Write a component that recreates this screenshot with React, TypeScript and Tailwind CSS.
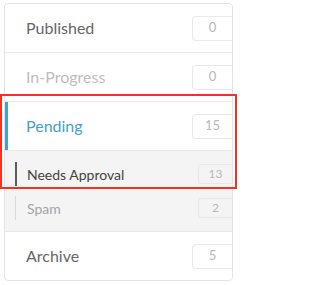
const main = [
  { label: "Published", count: 0, color: "text-[#666666]" },
  { label: "In-Progress", count: 0, color: "text-[#bdbdbd]" },
];

function Badge({ count, small }: { count: number; small?: boolean }) {
  return (
    <span
      className={
        small
          ? "flex h-[20px] w-[34px] items-center justify-center rounded-l-[4px] border border-r-0 border-[#e8e8e8] text-[12px] text-[#b8b8b8]"
          : "flex h-[25px] w-[40px] items-center justify-center rounded-l-[4px] border border-r-0 border-[#e8e8e8] text-[13px] text-[#b8b8b8]"
      }
    >
      {count}
    </span>
  );
}

export default function App() {
  return (
    <div className="relative h-[285px] w-[239px] bg-white pl-[4px] pt-[3px] font-['Lato',sans-serif]">
      <div className="w-[229px] overflow-hidden rounded-[4px] border border-[#e3e3e3] bg-white">
        {main.map((row) => (
          <div
            key={row.label}
            className="flex h-[49px] items-center justify-between border-b border-[#e8e8e8] pl-[21px]"
          >
            <span className={`text-[16px] ${row.color}`}>{row.label}</span>
            <Badge count={row.count} />
          </div>
        ))}
        <div className="flex h-[48px] items-center justify-between border-l-[3px] border-[#45a0cd] pl-[18px]">
          <span className="text-[16px] text-[#45a0cd]">Pending</span>
          <Badge count={15} />
        </div>
        <div className="flex flex-col gap-[10px] border-t border-[#e8e8e8] bg-[#f4f4f4] pb-[11px] pt-[11px]">
          <div className="flex h-[24px] items-center justify-between pl-[10px]">
            <span className="flex h-full items-center border-l-[2px] border-[#5a5a5a] pl-[10px] text-[14px] text-[#444444]">
              Needs Approval
            </span>
            <Badge count={13} small />
          </div>
          <div className="flex h-[24px] items-center justify-between pl-[10px]">
            <span className="flex h-full items-center border-l border-[#d9d9d9] pl-[11px] text-[14px] text-[#a3a3a3]">
              Spam
            </span>
            <Badge count={2} small />
          </div>
        </div>
        <div className="flex h-[49px] items-center justify-between border-t border-[#e8e8e8] pl-[21px]">
          <span className="text-[16px] text-[#666666]">Archive</span>
          <Badge count={5} />
        </div>
      </div>
      <div className="pointer-events-none absolute left-[0px] top-[94px] h-[95px] w-[237px] border-2 border-[#f5321f]" />
    </div>
  );
}
